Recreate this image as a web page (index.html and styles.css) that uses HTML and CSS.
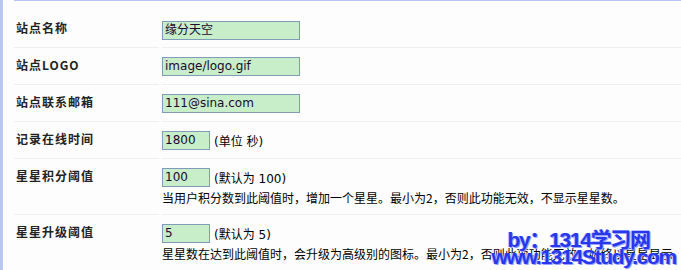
FILE: index.html
```html
<!doctype html>
<html lang="zh-CN">
<head>
  <meta charset="utf-8">
  <title>基本设置</title>
  <link rel="stylesheet" href="styles.css">
</head>

<body>
  <div class="page">
    <div class="side_bar"></div>
    <div class="settings">
      <div class="form_grid">
        <div class="cell_label first">站点名称</div>
        <div class="cell_field first">
          <div class="field_line"><span class="txt_input long">缘分天空</span></div>
        </div>

        <div class="cell_label">站点LOGO</div>
        <div class="cell_field">
          <div class="field_line"><span class="txt_input long">image/logo.gif</span></div>
        </div>

        <div class="cell_label">站点联系邮箱</div>
        <div class="cell_field">
          <div class="field_line"><span class="txt_input long">111@sina.com</span></div>
        </div>

        <div class="cell_label">记录在线时间</div>
        <div class="cell_field">
          <div class="field_line"><span class="txt_input short">1800</span><span class="unit">(单位 秒)</span></div>
        </div>

        <div class="cell_label">星星积分阈值</div>
        <div class="cell_field">
          <div class="field_line"><span class="txt_input short">100</span><span class="unit">(默认为 100)</span></div>
          <div class="hint">当用户积分数到此阈值时，增加一个星星。最小为2，否则此功能无效，不显示星星数。</div>
        </div>

        <div class="cell_label">星星升级阈值</div>
        <div class="cell_field">
          <div class="field_line"><span class="txt_input short">5</span><span class="unit">(默认为 5)</span></div>
          <div class="hint">星星数在达到此阈值时，会升级为高级别的图标。最小为2，否则此项功能无效，始终以星星显示</div>
        </div>
      </div>
    </div>

    <div class="watermark">
      <div class="wm_line1">by：1314学习网</div>
      <div class="wm_line2">www.1314Study.com</div>
    </div>
  </div>
</body>
</html>
```

FILE: styles.css
```css
html,
body {
  margin: 0;
  padding: 0;
  background: #fdfdfd;
  font-family: "DejaVu Sans", "Noto Sans CJK SC", sans-serif;
  font-size: 12px;
  color: #000;
}

.page {
  position: relative;
  display: flex;
  width: 681px;
  height: 270px;
  overflow: hidden;
}

.side_bar {
  width: 3px;
  background: #b9c5f5;
  flex: none;
}

.settings {
  flex: 1;
  margin-left: 11px;
  border-top: 1px solid #b9c5f5;
}

.form_grid {
  display: grid;
  grid-template-columns: 145px 1fr;
  column-gap: 3px;
}

.cell_label,
.cell_field {
  padding-top: 9px;
  padding-bottom: 8px;
  border-bottom: 1px solid #efefef;
}

.cell_label {
  padding-left: 2px;
  font-family: "Noto Sans CJK SC", sans-serif;
  font-weight: bold;
  letter-spacing: 1px;
  line-height: 15px;
  color: #222;
}

.cell_label.first,
.cell_field.first {
  padding-top: 20px;
  padding-bottom: 7px;
}

.cell_label.first {
  padding-top: 19px;
}

.field_line {
  display: flex;
  align-items: center;
  height: 19px;
}

.txt_input {
  box-sizing: border-box;
  height: 19px;
  padding: 0 2px;
  border: 1px solid #7f9db9;
  background: #c8edc9;
  line-height: 17px;
  color: #1a0a2e;
  white-space: nowrap;
}

.txt_input.long {
  width: 138px;
}

.txt_input.short {
  width: 48px;
}

.unit {
  margin-left: 4px;
  font-family: "DejaVu Sans", "Noto Sans CJK SC", sans-serif;
}

.hint {
  margin-top: 2px;
  line-height: 18px;
  font-family: "Noto Sans CJK SC", sans-serif;
  white-space: nowrap;
}

.cell_field:has(.hint) {
  padding-bottom: 7px;
}

.watermark {
  position: absolute;
  right: 5px;
  bottom: 5px;
  font-family: "Liberation Sans", Arial, "Noto Sans CJK SC", sans-serif;
  font-weight: bold;
  font-size: 21px;
  letter-spacing: -1.3px;
  line-height: 17px;
  color: #2637ee;
  text-shadow: 1px 1px 0 #9aa2ff, -1px 0 0 #c3c8ff;
}

.wm_line1 {
  padding-left: 16px;
}
```
